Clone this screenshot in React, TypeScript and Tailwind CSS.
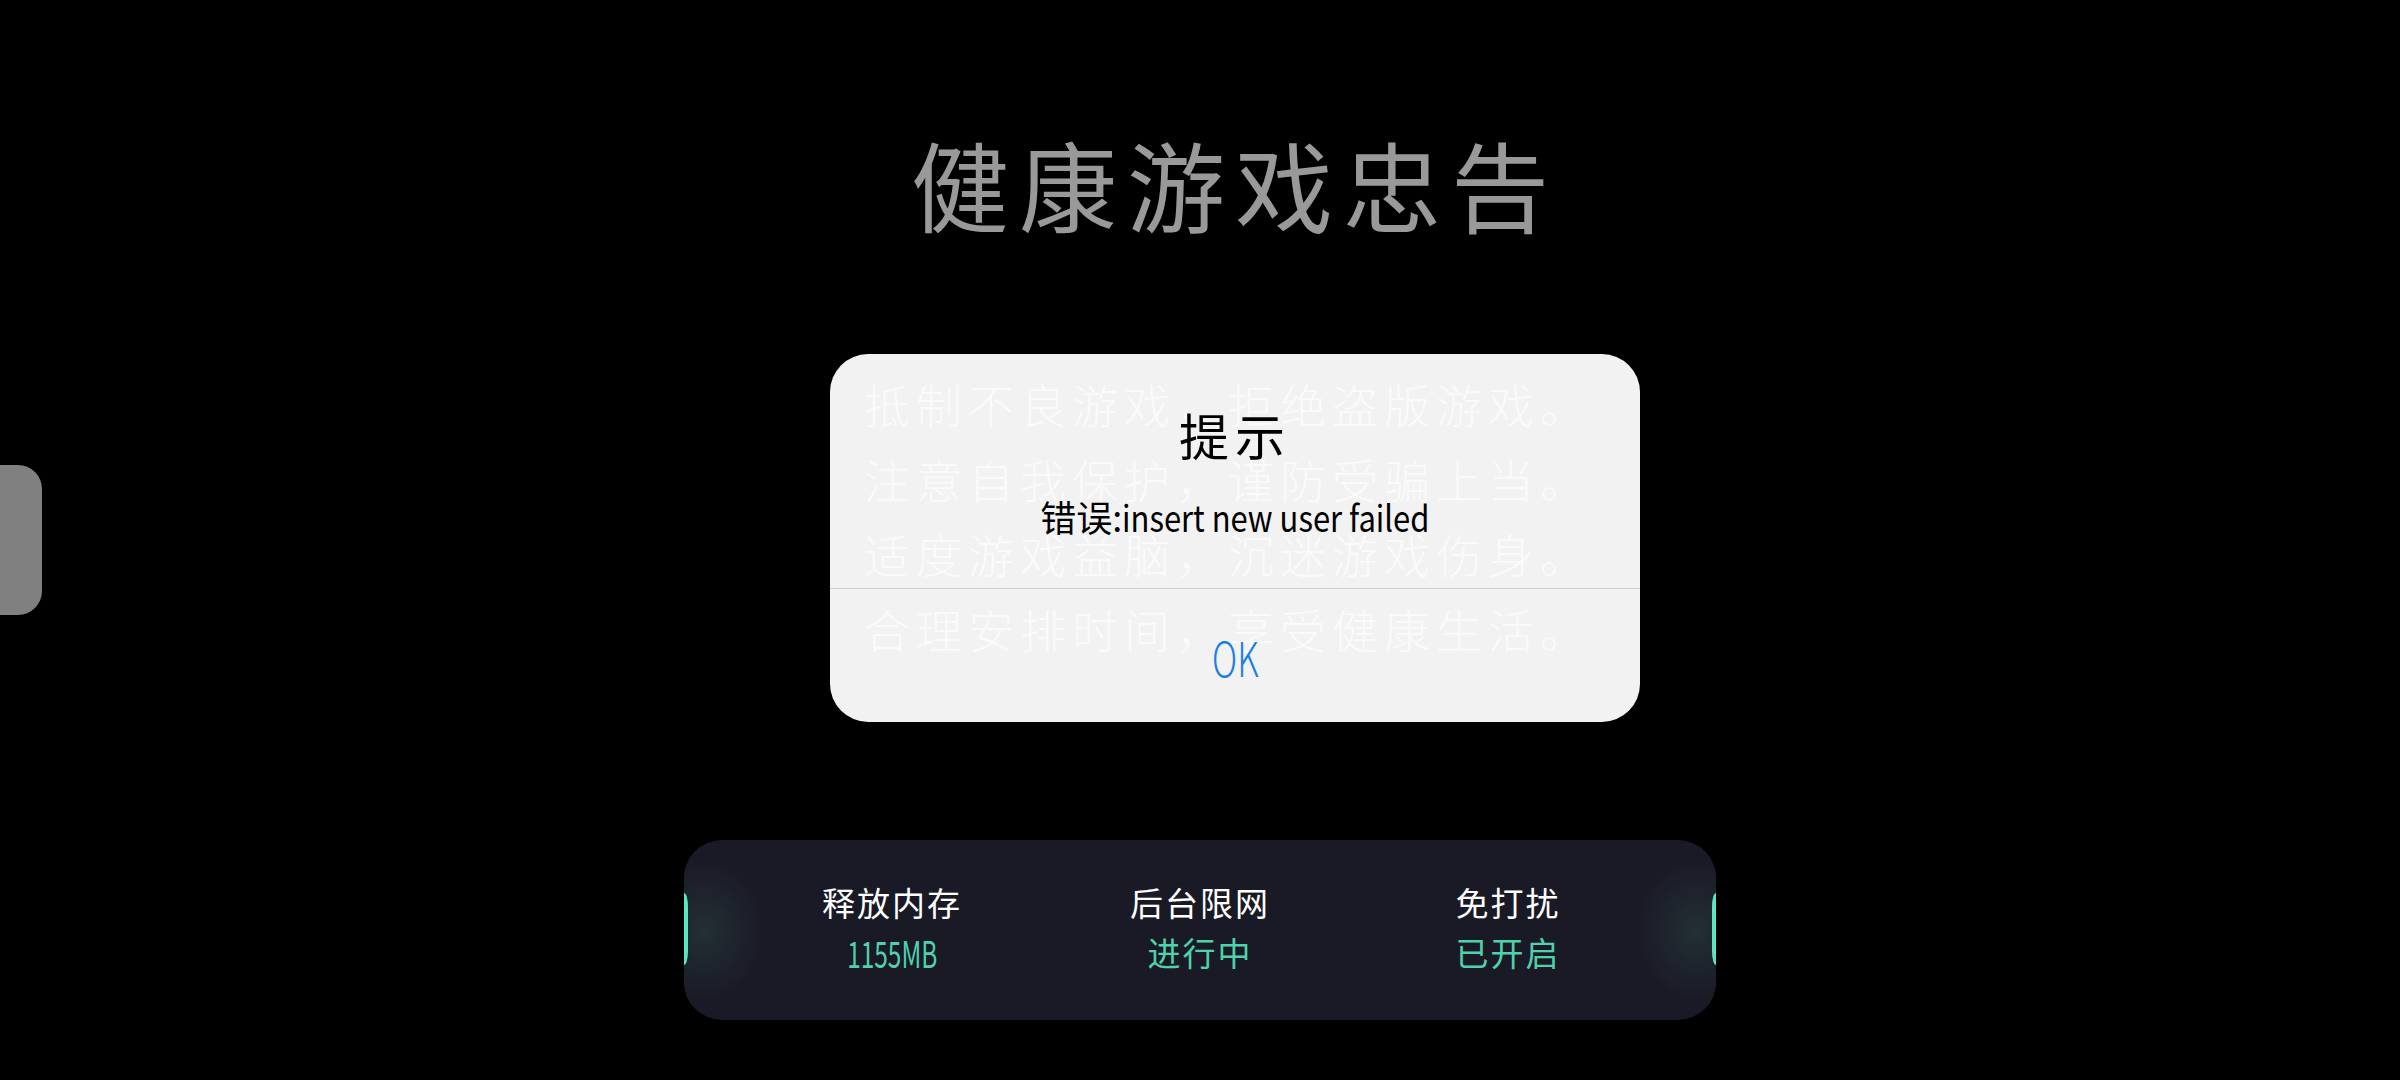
import React from "react";

const cjk = "font-['Noto_Sans_CJK_SC','Noto_Sans',sans-serif]";

const notices = [
  "抵制不良游戏，拒绝盗版游戏。",
  "注意自我保护，谨防受骗上当。",
  "适度游戏益脑，沉迷游戏伤身。",
  "合理安排时间，享受健康生活。",
];

const stats = [
  { label: "释放内存", value: "1155MB", narrow: true },
  { label: "后台限网", value: "进行中" },
  { label: "免打扰", value: "已开启" },
];

function EdgeGlow({ side }: { side: "left" | "right" }) {
  if (side === "left") {
    return (
      <>
        <div className="absolute left-0 top-[10px] h-[160px] w-[90px] bg-[radial-gradient(ellipse_60px_70px_at_20px_50%,#232f35,#1a1a26)]" />
        <div className="absolute left-0 top-[53px] h-[72px] w-[4px] rounded-tr-[4px_14px] rounded-br-[4px_14px] bg-[#5ce5bf]" />
      </>
    );
  }
  return (
    <>
      <div className="absolute right-0 top-[10px] h-[160px] w-[90px] bg-[radial-gradient(ellipse_60px_70px_at_70px_50%,#232f35,#1a1a26)]" />
      <div className="absolute right-0 top-[53px] h-[72px] w-[4px] rounded-tl-[4px_14px] rounded-bl-[4px_14px] bg-[#5ce5bf]" />
    </>
  );
}

export default function App() {
  return (
    <div className={`relative h-[1080px] w-[2400px] overflow-hidden bg-black ${cjk}`}>
      <div className="flex flex-col items-center">
        {/* notice text sits a bit right of the page centre */}
        <div className="ml-[70px] flex flex-col items-center pt-[132px]">
          <h1 className="text-[98px] font-normal leading-[100px] tracking-[10px] text-[#999999]">健康游戏忠告</h1>
          <div className="mt-[134px] mr-[14px] flex flex-col items-center">
            {notices.map((line) => (
              <p key={line} className="text-[46px] font-light leading-[75px] tracking-[6px] text-[#999999]">
                {line}
              </p>
            ))}
          </div>
        </div>

        <div className="relative mt-[174px] grid h-[180px] w-[1032px] grid-cols-3 overflow-hidden rounded-[38px] bg-[#1a1a26] px-[54px]">
          <EdgeGlow side="left" />
          <EdgeGlow side="right" />
          {stats.map((s) => (
            <div key={s.label} className="relative flex flex-col items-center pt-[37px]">
              <span className="text-[33px] font-normal leading-[50px] tracking-[2px] text-white">{s.label}</span>
              <span
                className={`font-normal leading-[50px] text-[#4fd1ab] ${s.narrow ? "inline-block scale-x-[0.66] text-[37px]" : "text-[33px] tracking-[2px]"}`}
              >
                {s.value}
              </span>
            </div>
          ))}
        </div>
      </div>

      {/* floating side handle */}
      <div className="absolute left-0 top-[465px] h-[150px] w-[42px] rounded-r-[24px] bg-[#808080]" />

      {/* alert dialog */}
      <div className="absolute left-[830px] top-[354px] flex h-[368px] w-[810px] flex-col rounded-[38px] bg-white/95">
        <div className="flex h-[235px] flex-col items-center border-b border-[#cfcfcf] pt-[50px]">
          <h2 className="text-[50px] font-normal leading-[60px] tracking-[6px] text-black">提示</h2>
          <p className="mt-[27px] whitespace-nowrap text-[36px] font-normal leading-[50px] text-black">
            错误:
            <span className="-mr-[50px] inline-block origin-left scale-x-[0.86]">insert new user failed</span>
          </p>
        </div>
        <div className="flex flex-1 items-center justify-center">
          <span className="inline-block scale-x-[0.72] text-[48px] font-light leading-none text-[#1a7fe3]">OK</span>
        </div>
      </div>
    </div>
  );
}
